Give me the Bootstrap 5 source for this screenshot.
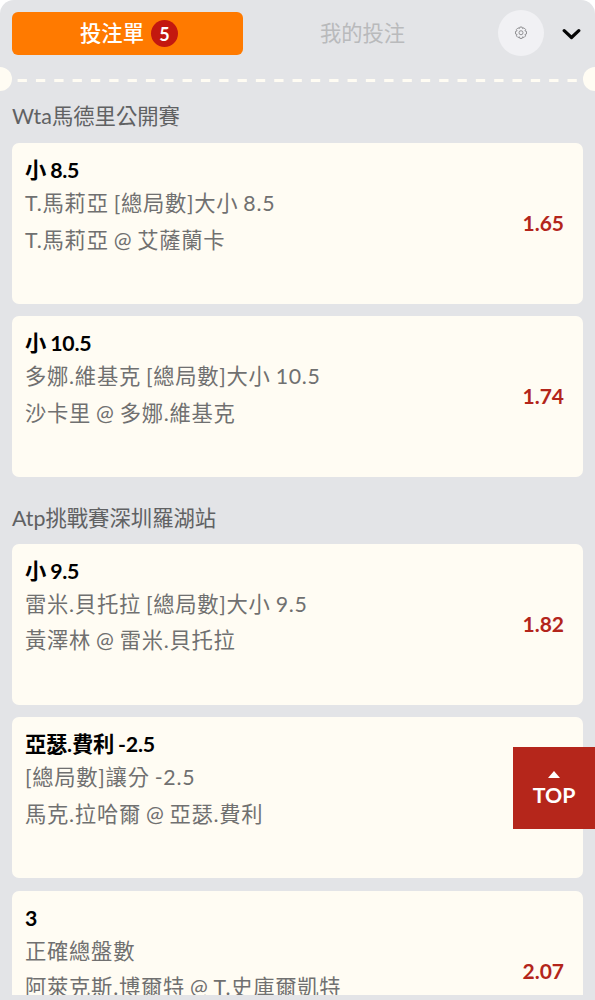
<!DOCTYPE html>
<html lang="zh-Hant">
<head>
<meta charset="utf-8">
<meta name="viewport" content="width=device-width, initial-scale=1">
<title>投注單</title>
<link rel="stylesheet" href="https://cdn.jsdelivr.net/npm/bootstrap@5.3.0/dist/css/bootstrap.min.css">
<style>
  body { font-family: Lato, "Noto Sans CJK TC", sans-serif; font-size: 21.3px; background: #fff; }
  .slip { height: 1000px; background: #e3e4e7; border-radius: 14px 14px 0 0; }
  .slip-head { height: 66px; padding-left: 12px; }
  .tab-btn { width: 231px; height: 43px; line-height: 1; font-size: 21.3px; border: 0; border-radius: 6px; padding: 2px 0 0; }
  .tab-on { background: #ff7a00; color: #fff; font-weight: 500; padding: 0 0 0 3px; }
  .tab-on:hover { background: #f07300; color: #fff; }
  .tab-off { color: #b9babc; width: 239px; }
  .count { width: 27px; height: 27px; background: #c3180f; font-size: 18px; font-weight: 700; margin-left: 7px; padding-top: 1px; }
  .tab-label { padding-top: 2px; }
  .gear { width: 46px; height: 46px; background: #f1f1f4; margin-left: 16px; }
  .chev { margin-left: 18px; }
  .tear { height: 25px; }
  .tear svg { display: block; }
  .slip-list { height: 904px; padding: 0 12.5px 0 12px; }
  .league { font-size: 21.35px; line-height: 24px; color: #606163; }
  .league-first { padding-top: 13px; margin-bottom: 15px; }
  .league-next { padding-top: 16px; margin-bottom: 14.4px; }
  .bet { height: 161px; background: #fffcf3; border: 0; border-radius: 7px; padding: 11px 18.5px 0 13px; margin-bottom: 12.3px; }
  .pick { font-size: 21.3px; line-height: 32px; font-weight: 700; color: #000; word-spacing: -.8px; letter-spacing: -.25px; }
  .info { font-size: 21.3px; line-height: 36.5px; letter-spacing: .74px; word-spacing: -1.2px; color: #707070; white-space: nowrap; margin-top: -1px; }
  .info + .info { margin-top: 0; }
  .odds { color: #b3251b; font-weight: 700; font-size: 21px; line-height: 26px; margin-top: 56px; }
  .to-top { right: 0; top: 747px; width: 82px; height: 82px; background: #b5261b; color: #fff; font-size: 21.3px; font-weight: 700; line-height: 26px; border: 0; padding: 3px 0 0; }
  .to-top svg { margin-bottom: 4px; }
</style>
</head>
<body>
<main class="slip position-relative overflow-hidden">
  <header class="slip-head d-flex align-items-center">
    <button class="btn tab-btn tab-on d-flex align-items-center justify-content-center"><span class="tab-label">投注單</span><span class="count rounded-circle d-flex align-items-center justify-content-center">5</span></button>
    <button class="btn tab-btn tab-off">我的投注</button>
    <button class="btn gear rounded-circle border-0 p-0 d-flex align-items-center justify-content-center" aria-label="設定">
      <svg width="14" height="14" viewBox="0 0 16 16" fill="none" stroke="#858587" stroke-width="1" stroke-linejoin="round"><path d="M6.7 1.2h2.6l.5 1.7 1.6-.8 1.9 1.9-.8 1.6 1.8.6v2.9l-1.8.6.8 1.6-1.9 1.9-1.6-.8-.5 1.8H6.7l-.5-1.8-1.6.8-1.9-1.9.8-1.6-1.8-.6V6.2l1.8-.6L2.7 4l1.9-1.9 1.6.8z"/><circle cx="8" cy="7.7" r="2.3"/></svg>
    </button>
    <svg class="chev" width="19" height="13" viewBox="0 0 19 13" fill="none" stroke="#050505" stroke-width="3.2" stroke-linecap="round" stroke-linejoin="round"><path d="M2.2 3.700 9.500 10.500l7.300-6.800"/></svg>
  </header>
  <div class="tear">
    <svg width="595" height="25" viewBox="0 0 595 25"><path d="M17.6 14.500H578" stroke="#fffcf3" stroke-width="3" stroke-dasharray="9.300 9.030"/><circle cx="0" cy="13" r="12" fill="#fffcf3"/><circle cx="595" cy="13" r="12" fill="#fffcf3"/></svg>
  </div>
  <section class="slip-list overflow-hidden">
    <h2 class="league league-first fw-normal mt-0">Wta馬德里公開賽</h2>
    <article class="bet d-flex justify-content-between">
      <div><div class="pick">小 8.5</div><div class="info">T.馬莉亞 [總局數]大小 8.5</div><div class="info">T.馬莉亞 @ 艾薩蘭卡</div></div>
      <div class="odds">1.65</div>
    </article>
    <article class="bet d-flex justify-content-between">
      <div><div class="pick">小 10.5</div><div class="info">多娜.維基克 [總局數]大小 10.5</div><div class="info">沙卡里 @ 多娜.維基克</div></div>
      <div class="odds">1.74</div>
    </article>
    <h2 class="league league-next fw-normal mt-0">Atp挑戰賽深圳羅湖站</h2>
    <article class="bet d-flex justify-content-between">
      <div><div class="pick">小 9.5</div><div class="info">雷米.貝托拉 [總局數]大小 9.5</div><div class="info">黃澤林 @ 雷米.貝托拉</div></div>
      <div class="odds">1.82</div>
    </article>
    <article class="bet d-flex justify-content-between">
      <div><div class="pick">亞瑟.費利 -2.5</div><div class="info">[總局數]讓分 -2.5</div><div class="info">馬克.拉哈爾 @ 亞瑟.費利</div></div>
    </article>
    <article class="bet d-flex justify-content-between">
      <div><div class="pick">3</div><div class="info">正確總盤數</div><div class="info">阿萊克斯.博爾特 @ T.史庫爾凱特</div></div>
      <div class="odds">2.07</div>
    </article>
  </section>
  <button class="to-top position-absolute d-flex flex-column align-items-center justify-content-center">
    <svg width="12" height="7" viewBox="0 0 12 7" fill="#fff"><path d="M6 0 12 7H0z"/></svg>
    <span>TOP</span>
  </button>
</main>
<script src="https://cdn.jsdelivr.net/npm/bootstrap@5.3.0/dist/js/bootstrap.bundle.min.js"></script>
</body>
</html>
